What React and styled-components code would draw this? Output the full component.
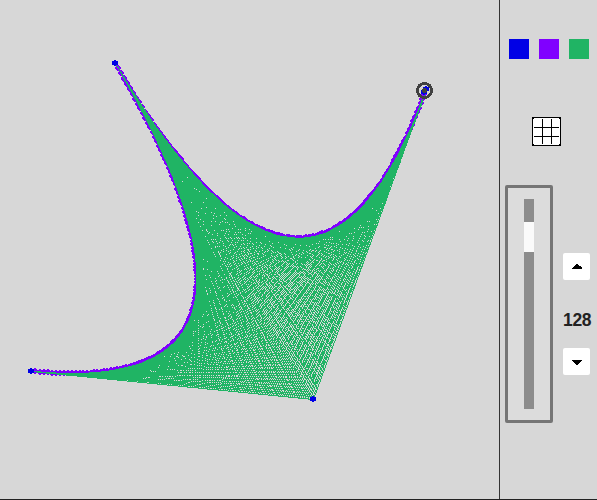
import React from "react";
import styled, { createGlobalStyle } from "styled-components";

const GlobalStyle = createGlobalStyle`
  * { box-sizing: border-box; }
  html, body { margin: 0; padding: 0; background: #d7d7d7; overflow: hidden; }
`;

const BLUE = "#0000e6";
const PURPLE = "#8000ff";
const GREEN = "#20b464";
const STEPS = 128;
const WIDTH = 499;
const DOT_ROWS = [2, 4, 6, 6, 4, 2];
const KNOT_ROWS = [2, 6, 6, 6, 6, 2];

const A = [115, 63];
const B = [426, 89];
const C = [313, 399];
const D = [31, 371];
const POINTER = [424, 92];

const lerp = (p, q, t) => [p[0] + (q[0] - p[0]) * t, p[1] + (q[1] - p[1]) * t];
const snap = (p) => [Math.round(p[0]), Math.round(p[1])];

// Whole-pixel line rasteriser
function plotLine(set, [x0, y0], [x1, y1]) {
  const dx = Math.abs(x1 - x0);
  const dy = -Math.abs(y1 - y0);
  const sx = x0 < x1 ? 1 : -1;
  const sy = y0 < y1 ? 1 : -1;
  let err = dx + dy;
  for (;;) {
    set.add(y0 * WIDTH + x0);
    if (x0 === x1 && y0 === y1) return;
    const e2 = 2 * err;
    if (e2 >= dy) { err += dy; x0 += sx; }
    if (e2 <= dx) { err += dx; y0 += sy; }
  }
}

// Small disc built from centred pixel rows
function plotDisc(set, [cx, cy], rows) {
  rows.forEach((w, i) => {
    const y = cy - rows.length / 2 + i;
    for (let x = cx - w / 2; x < cx + w / 2; x++) set.add(y * WIDTH + x);
  });
}

// Joins plotted pixels into horizontal runs
function toPath(set) {
  const px = [...set].sort((a, b) => a - b);
  let d = "";
  for (let i = 0; i < px.length; ) {
    let j = i + 1;
    while (j < px.length && px[j] === px[j - 1] + 1) j++;
    const n = j - i;
    d += `M${px[i] % WIDTH} ${Math.floor(px[i] / WIDTH)}h${n}v1h-${n}z`;
    i = j;
  }
  return d;
}

function buildDrawing() {
  const curve = new Set();
  const strings = new Set();
  const knots = new Set();
  [[A, C, B], [A, C, D]].forEach(([p, q, r]) => {
    for (let i = 0; i <= STEPS; i++) {
      const t = i / STEPS;
      const s = lerp(p, q, t);
      const e = lerp(q, r, t);
      plotLine(strings, snap(s), snap(e));
      plotDisc(curve, snap(lerp(s, e, t)), DOT_ROWS);
    }
  });
  [A, B, C, D, POINTER].forEach((p) => plotDisc(knots, p, KNOT_ROWS));
  return { curve: toPath(curve), strings: toPath(strings), knots: toPath(knots) };
}

const drawing = buildDrawing();

const Window = styled.main`
  display: flex;
  width: 597px;
  height: 500px;
  background: #d7d7d7;
  border-bottom: 1px solid #222;
  font-family: "Liberation Sans", Arial, sans-serif;
`;

const Board = styled.svg`
  display: block;
  flex: none;
`;

const Sidebar = styled.aside`
  width: 98px;
  border-left: 1px solid #333;
`;

const Swatches = styled.div`
  display: flex;
  gap: 10px;
  padding: 39px 0 0 9px;
`;

const Swatch = styled.button`
  width: 20px;
  height: 20px;
  padding: 0;
  border: 0;
  background: ${(p) => p.$color};
`;

const GridToggle = styled.button`
  display: block;
  width: 29px;
  height: 29px;
  margin: 58px 0 0 32px;
  padding: 0;
  border: 0;
  background: #fff;
  svg { display: block; }
`;

const Controls = styled.div`
  display: flex;
  gap: 10px;
  padding: 39px 0 0 5px;
`;

const SliderFrame = styled.div`
  width: 48px;
  height: 238px;
  padding: 11px 0 0 16px;
  border: 3px solid #757575;
  border-radius: 2px;
  background: #dcdcdc;
`;

const Track = styled.div`
  width: 10px;
  height: 210px;
  padding-top: 23px;
  background: #8c8c8c;
`;

const Thumb = styled.div`
  height: 30px;
  background: #fafafa;
`;

const Stepper = styled.div`
  display: flex;
  flex-direction: column;
  align-items: flex-start;
  width: 29px;
  padding-top: 68px;
`;

const StepButton = styled.button`
  width: 27px;
  height: 27px;
  padding: 0;
  border: 0;
  border-radius: 2px;
  background: #fff;
  svg { display: block; }
`;

const Count = styled.div`
  height: 68px;
  line-height: 80px;
  font-size: 17.5px;
  letter-spacing: -0.3px;
  font-weight: bold;
  color: #222;
`;

export default function App() {
  return (
    <>
      <GlobalStyle />
      <Window>
        <Board width="499" height="499" viewBox="0 0 499 499" shapeRendering="crispEdges">
          <path d={drawing.curve} fill={PURPLE} />
          <path d={drawing.strings} fill={GREEN} />
          <path d={drawing.knots} fill={BLUE} />
          <circle cx="424.5" cy="90.5" r="7" fill="none" stroke="#404040" strokeWidth="3" />
          <circle cx="424.5" cy="90.5" r="2.5" fill="#404040" />
        </Board>
        <Sidebar>
          <Swatches>
            <Swatch $color={BLUE} />
            <Swatch $color={PURPLE} />
            <Swatch $color={GREEN} />
          </Swatches>
          <GridToggle>
            <svg width="29" height="29" viewBox="0 0 29 29" shapeRendering="crispEdges">
              <path d="M0 0h29v29h-29zM1 1v27h27v-27z" fillRule="evenodd" />
              <path d="M1 1h1v1h-1zM27 1h1v1h-1zM1 27h1v1h-1zM27 27h1v1h-1zM10 2h1v25h-1zM19 2h1v25h-1zM2 10h25v1h-25zM2 19h25v1h-25z" />
            </svg>
          </GridToggle>
          <Controls>
            <SliderFrame>
              <Track><Thumb /></Track>
            </SliderFrame>
            <Stepper>
              <StepButton>
                <svg width="27" height="27" viewBox="0 0 27 27" shapeRendering="crispEdges">
                  <path d="M13 11h2v1h1v1h2v1h1v2h-10v-1h1v-1h1v-1h1v-1h1z" />
                </svg>
              </StepButton>
              <Count>{STEPS}</Count>
              <StepButton>
                <svg width="27" height="27" viewBox="0 0 27 27" shapeRendering="crispEdges">
                  <path d="M9 12h10v1h-1v1h-1v1h-1v1h-1v1h-2v-1h-1v-1h-1v-1h-1v-1h-1z" />
                </svg>
              </StepButton>
            </Stepper>
          </Controls>
        </Sidebar>
      </Window>
    </>
  );
}
